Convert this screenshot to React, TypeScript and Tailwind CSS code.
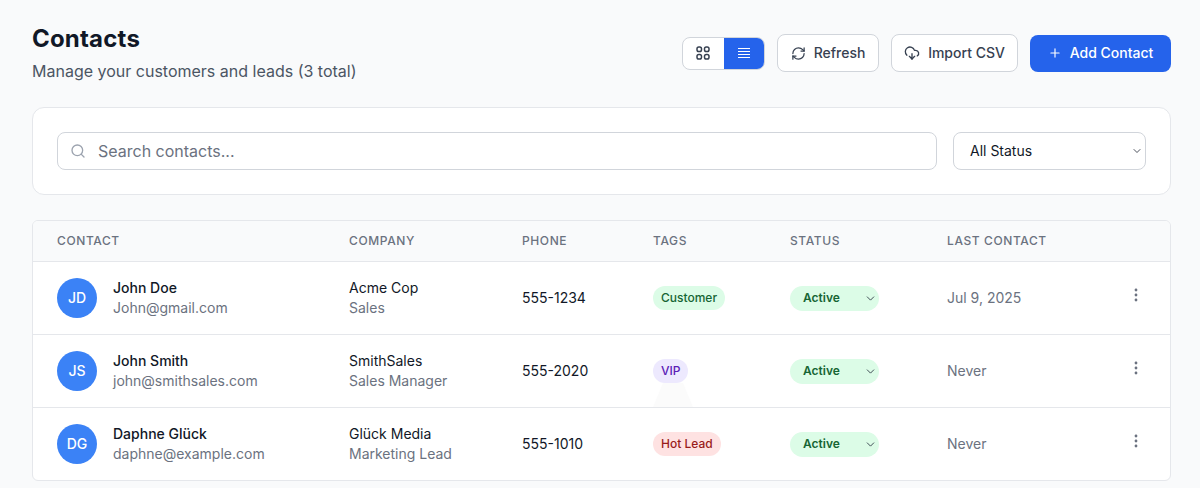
import { RefreshCw, CloudDownload, Plus, Search, ChevronDown } from "lucide-react";

const rows = [
  { i: "JD", n: "John Doe", e: "John@gmail.com", c: "Acme Cop", r: "Sales", p: "555-1234", t: "Customer", tc: "bg-[#dcfce7] text-[#166534]", l: "Jul 9, 2025" },
  { i: "JS", n: "John Smith", e: "john@smithsales.com", c: "SmithSales", r: "Sales Manager", p: "555-2020", t: "VIP", tc: "bg-[#ede9fe] text-[#5b21b6]", l: "Never", fade: true },
  { i: "DG", n: "Daphne Glück", e: "daphne@example.com", c: "Glück Media", r: "Marketing Lead", p: "555-1010", t: "Hot Lead", tc: "bg-[#fee2e2] text-[#991b1b]", l: "Never" },
];

const cols = "grid grid-cols-[292px_173px_131px_137px_157px_1fr] items-center pl-6";

export default function App() {
  return (
    <div className="h-[488px] overflow-hidden bg-[#f9fafb] pl-8 pr-[29px] pt-[23px] font-['Inter',sans-serif] text-[#111827]">
      <div className="flex items-start justify-between">
        <div>
          <h1 className="text-2xl font-bold leading-8 tracking-[0.2px]">Contacts</h1>
          <p className="mt-1 text-base leading-6 text-[#4b5563]">Manage your customers and leads (3 total)</p>
        </div>
        <div className="mt-[11px] flex items-center gap-3">
          <div className="flex h-[33px] w-[83px] overflow-hidden rounded-lg border border-[#d1d5db] bg-white">
            <div className="flex flex-1 items-center justify-center text-[#374151]">
              <svg width="14" height="14" viewBox="0 0 14 14" fill="none" stroke="currentColor" strokeWidth="1.5">
                <rect x="1" y="1" width="4.5" height="4.5" rx="1.8" />
                <rect x="8.5" y="1" width="4.5" height="4.5" rx="1.8" />
                <rect x="1" y="8.5" width="4.5" height="4.5" rx="1.8" />
                <rect x="8.5" y="8.5" width="4.5" height="4.5" rx="1.8" />
              </svg>
            </div>
            <div className="flex flex-1 items-center justify-center bg-[#2563eb] text-white">
              <svg width="14" height="14" viewBox="0 0 14 14" fill="none" stroke="currentColor" strokeWidth="1.2">
                <path d="M1 2.5h12M1 5.5h12M1 8.5h12M1 11.5h12" />
              </svg>
            </div>
          </div>
          <button className="flex h-[38px] w-[102px] items-center justify-center gap-2 rounded-lg border border-[#d1d5db] bg-white text-sm font-medium text-[#374151]"><RefreshCw size={15} />Refresh</button>
          <button className="flex h-[38px] w-[127px] items-center justify-center gap-2 rounded-lg border border-[#d1d5db] bg-white text-sm font-medium text-[#374151]"><CloudDownload size={16} />Import CSV</button>
          <button className="flex h-[37px] w-[141px] items-center justify-center gap-2 rounded-lg bg-[#2563eb] text-sm font-medium text-white"><Plus size={14} />Add Contact</button>
        </div>
      </div>

      <div className="mt-6 flex items-center gap-4 rounded-xl border border-[#e5e7eb] bg-white p-6">
        <div className="flex h-[38px] flex-1 items-center gap-3 rounded-lg border border-[#d1d5db] bg-white pl-3 text-base text-[#6b7280]">
          <Search size={16} className="text-[#9ca3af]" />
          <span>Search contacts...</span>
        </div>
        <div className="flex h-[38px] w-[193px] items-center justify-between rounded-lg border border-[#d1d5db] bg-white pl-4 pr-[2px] text-sm text-[#111827]">
          <span>All Status</span>
          <ChevronDown size={12} strokeWidth={1.5} />
        </div>
      </div>

      <div className="mt-[25px] overflow-hidden rounded-md border border-[#e5e7eb] bg-white">
        <div className={`${cols} h-[41px] border-b border-[#e5e7eb] bg-[#f9fafb] text-xs font-medium tracking-[0.6px] text-[#6b7280]`}>
          <div>CONTACT</div><div>COMPANY</div><div>PHONE</div><div>TAGS</div><div>STATUS</div><div>LAST CONTACT</div>
        </div>
        {rows.map((r) => (
          <div key={r.i} className={`${cols} h-[73px] border-b border-[#e5e7eb] text-sm last:h-[72px] last:border-b-0`}>
            <div className="flex items-center gap-4">
              <div className="flex h-10 w-10 items-center justify-center rounded-full bg-[#3b82f6] text-sm font-medium text-white">{r.i}</div>
              <div>
                <div className="font-medium leading-5 text-[#111827]">{r.n}</div>
                <div className="leading-5 text-[#6b7280]">{r.e}</div>
              </div>
            </div>
            <div>
              <div className="leading-5 text-[#111827]">{r.c}</div>
              <div className="leading-5 text-[#6b7280]">{r.r}</div>
            </div>
            <div className="text-[#111827]">{r.p}</div>
            <div className="relative">
              <span className={`-mt-[2px] inline-block h-6 rounded-full px-[8px] text-xs font-medium leading-6 ${r.tc}`}>{r.t}</span>
              {r.fade && (
                <svg className="absolute left-0 top-[23px]" width="40" height="24" viewBox="0 0 40 24"><path d="M10 0h20l10 24H0z" fill="#fbfbfb" /></svg>
              )}
            </div>
            <div>
              <div className="flex h-[25px] w-[89px] items-center justify-between rounded-full bg-[#dcfce7] pl-[13px] pr-[2px] text-xs font-semibold text-[#166534]">
                Active<ChevronDown size={13} strokeWidth={1.5} className="text-[#1f2937]" />
              </div>
            </div>
            <div className="flex items-center justify-between pr-8 text-[#6b7280]">
              <span>{r.l}</span>
              <svg className="-mt-[6px]" width="4" height="14" viewBox="0 0 4 14" fill="#6b7280">
                <circle cx="2" cy="2" r="1.4" />
                <circle cx="2" cy="7" r="1.4" />
                <circle cx="2" cy="12" r="1.4" />
              </svg>
            </div>
          </div>
        ))}
      </div>
    </div>
  );
}
